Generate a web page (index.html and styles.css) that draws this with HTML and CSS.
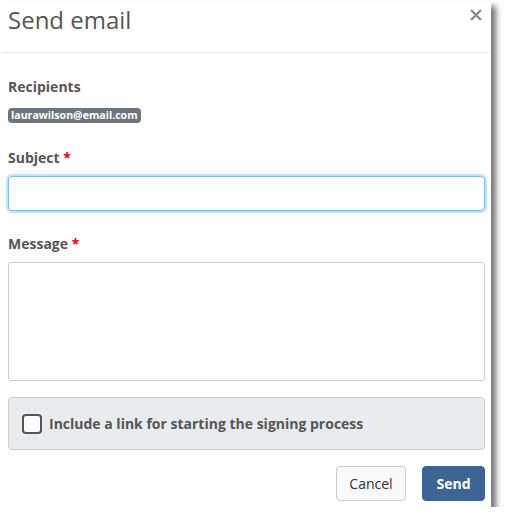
FILE: index.html
```html
<!DOCTYPE html>
<html>
<head>
<meta charset="utf-8">
<link rel="stylesheet" href="styles.css">
</head>
<body>
<div class="dialog">
  <div class="header">
    <h1 class="title">Send email</h1>
    <svg class="close" width="12" height="12" viewBox="0 0 12 12" aria-label="Close"><path d="M1 1L11 11M11 1L1 11" stroke="#8a8a8a" stroke-width="2.4" stroke-linecap="butt"/></svg>
  </div>
  <div class="body">
    <div class="group">
      <div class="label first">Recipients</div>
      <span class="badge">laurawilson@email.com</span>
    </div>
    <div class="group">
      <div class="label subject">Subject <span class="req">*</span></div>
      <input class="input focus" type="text">
    </div>
    <div class="group">
      <div class="label">Message <span class="req">*</span></div>
      <textarea class="textarea"></textarea>
    </div>
    <div class="panel">
      <span class="check"></span>
      <span class="check-label">Include a link for starting the signing process</span>
    </div>
  </div>
  <div class="footer">
    <button class="btn btn-light">Cancel</button>
    <button class="btn btn-primary">Send</button>
  </div>
</div>
</body>
</html>
```
FILE: styles.css
```css
html, body {
  margin: 0;
  padding: 0;
  background: #fff;
}
body {
  font-family: "Open Sans", "Noto Sans", sans-serif;
  color: #555;
}
.dialog {
  width: 491px;
  margin-top: 1px;
  background: #fff;
  box-shadow: 5px 5px 6px rgba(0,0,0,0.55);
  display: flex;
  flex-direction: column;
}
.header {
  display: flex;
  justify-content: space-between;
  align-items: flex-start;
  height: 51px;
  border-bottom: 1px solid #e6e6e6;
  margin: 0 1px 0 2px;
  padding: 0 8px 0 6px;
}
.title {
  margin: 0;
  font-size: 24px;
  font-weight: 400;
  line-height: 38px;
  color: #555;
}
.close {
  margin-top: 8px;
  margin-right: 0;
}
.body {
  padding: 0 6px 0 8px;
}
.group {
  display: flex;
  flex-direction: column;
  align-items: flex-start;
}
.label {
  font-size: 14px;
  font-weight: 700;
  color: #555;
  margin-top: 23px;
  margin-bottom: 8px;
  line-height: 20px;
}
.label.first {
  margin-top: 24px;
  margin-bottom: 11px;
}
.label.subject {
  margin-top: 25px;
}
.req {
  color: #e00;
}
.badge {
  background: #6c757d;
  color: #fff;
  font-size: 10.6px;
  font-weight: 700;
  border-radius: 4px;
  padding: 0 3px;
  line-height: 15px;
}
.input {
  box-sizing: border-box;
  width: 477px;
  height: 35px;
  margin: 0;
  border: 1px solid #80bdff;
  border-radius: 4px;
  box-shadow: 0 0 0 2px rgba(0,123,255,0.22);
  outline: none;
}
.textarea {
  box-sizing: border-box;
  width: 477px;
  height: 119px;
  margin: 0;
  border: 1px solid #ccc;
  border-radius: 3px;
  resize: none;
  display: block;
}
.panel {
  box-sizing: border-box;
  width: 477px;
  height: 53px;
  margin-top: 16px;
  background: #e9ecef;
  border: 1px solid #ccc;
  border-radius: 4px;
  display: flex;
  align-items: center;
  padding-left: 13px;
  gap: 7px;
}
.check {
  box-sizing: border-box;
  width: 20px;
  height: 20px;
  border: 2px solid #555;
  border-radius: 4px;
  background: #fff;
}
.check-label {
  font-size: 14px;
  font-weight: 700;
  color: #555;
}
.footer {
  display: flex;
  justify-content: flex-end;
  gap: 16px;
  padding: 16px 6px 6px 0;
}
.btn {
  font-family: "Open Sans", "Noto Sans", sans-serif;
  font-size: 14px;
  height: 35px;
  border-radius: 4px;
  cursor: pointer;
}
.btn-light {
  width: 70px;
  background: #f8f9fa;
  border: 1px solid #ccc;
  color: #333;
}
.btn-primary {
  width: 63px;
  background: #3d6594;
  border: 1px solid #3d6594;
  color: #fff;
  font-weight: 700;
}
```
